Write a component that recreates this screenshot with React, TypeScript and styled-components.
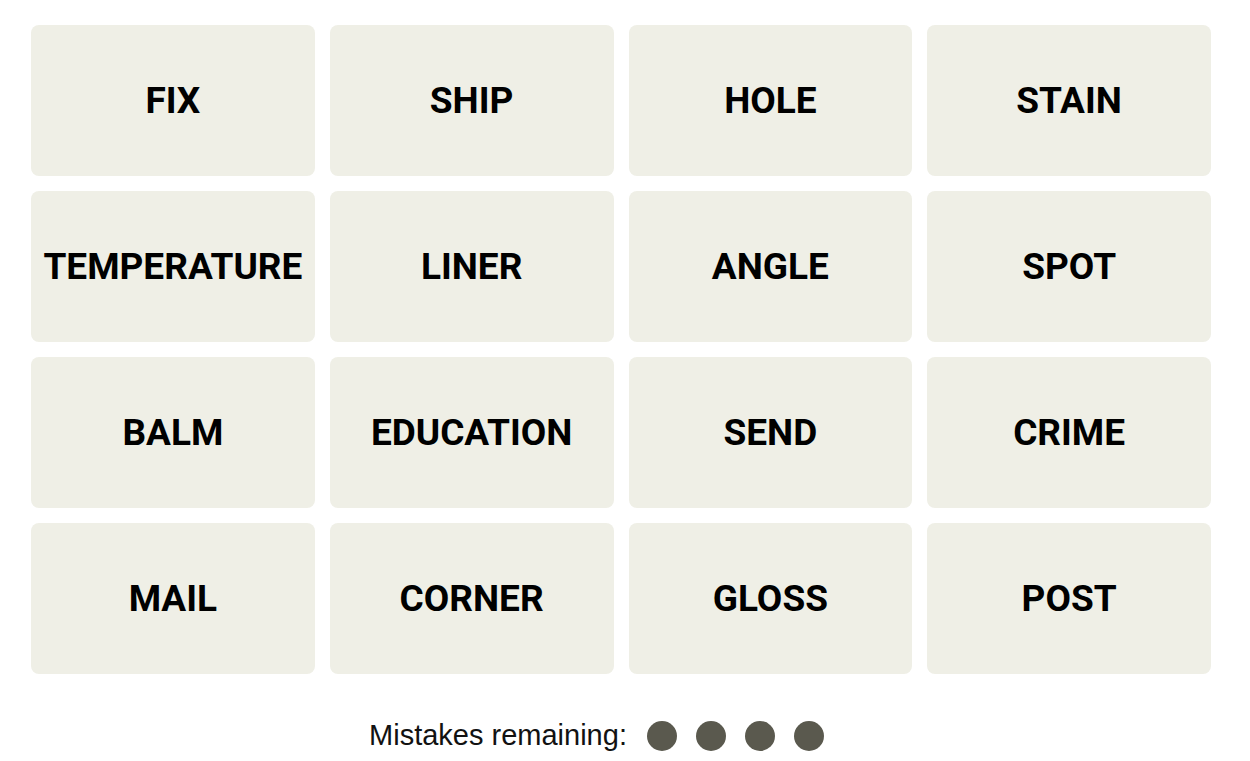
import React from "react";
import styled, { createGlobalStyle } from "styled-components";

const Global = createGlobalStyle`
  html, body { margin: 0; padding: 0; background: #ffffff; }
  body { font-family: "Liberation Sans", Arial, sans-serif; color: #000; }
`;

const Page = styled.div`
  padding: 25px 0 0 31px;
  width: 1180px;
`;

const Board = styled.div`
  display: grid;
  grid-template-columns: repeat(4, 1fr);
  column-gap: 15px;
  row-gap: 15px;
`;

const Tile = styled.button`
  height: 151px;
  border: none;
  border-radius: 8px;
  background: #efefe6;
  display: flex;
  align-items: center;
  justify-content: center;
  font-family: Roboto, "Liberation Sans", Arial, sans-serif;
  font-weight: 700;
  font-size: 37px;
  letter-spacing: 0;
  color: #000;
  text-transform: uppercase;
  padding: 0;
  cursor: pointer;
`;

const Mistakes = styled.div`
  margin-top: 45px;
  display: flex;
  align-items: center;
  justify-content: center;
  padding-right: 49px;
  gap: 20px;
`;

const Label = styled.span`
  font-family: "Liberation Sans", Arial, sans-serif;
  font-size: 29px;
  color: #121212;
`;

const Dots = styled.div`
  display: flex;
  gap: 19px;
`;

const Dot = styled.span`
  width: 30px;
  height: 30px;
  border-radius: 50%;
  background: #5a594e;
  display: block;
`;

const words = [
  "FIX", "SHIP", "HOLE", "STAIN",
  "TEMPERATURE", "LINER", "ANGLE", "SPOT",
  "BALM", "EDUCATION", "SEND", "CRIME",
  "MAIL", "CORNER", "GLOSS", "POST",
];

export default function App() {
  return (
    <>
      <Global />
      <Page>
        <Board>
          {words.map((w) => (
            <Tile key={w}>{w}</Tile>
          ))}
        </Board>
        <Mistakes>
          <Label>Mistakes remaining:</Label>
          <Dots>
            {[0, 1, 2, 3].map((i) => (
              <Dot key={i} />
            ))}
          </Dots>
        </Mistakes>
      </Page>
    </>
  );
}
